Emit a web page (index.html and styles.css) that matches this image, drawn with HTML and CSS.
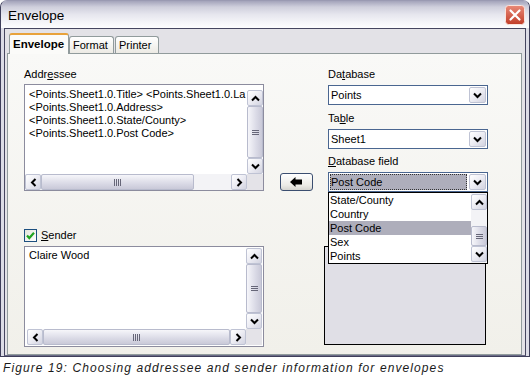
FILE: index.html
```html
<!DOCTYPE html>
<html>
<head>
<meta charset="utf-8">
<link rel="stylesheet" href="styles.css">
</head>
<body>
<div class="window">
  <div class="titlebar">
    <span class="title">Envelope</span>
    <span class="close">
      <svg width="20" height="20" viewBox="0 0 20 20">
        <defs><linearGradient id="cg" x1="0" y1="0" x2="0" y2="1"><stop offset="0" stop-color="#e98a78"/><stop offset="1" stop-color="#c03c28"/></linearGradient></defs>
        <rect x="0.5" y="0.5" width="19" height="19" rx="3" fill="url(#cg)" stroke="#fbe3dc"/>
        <path d="M5.5 5.5 L14.5 14.5 M14.5 5.5 L5.5 14.5" stroke="#fff" stroke-width="2.2" stroke-linecap="round"/>
      </svg>
    </span>
  </div>
  <div class="frame">
    <div class="client">
      <div class="tabs">
        <div class="tab active">Envelope</div>
        <div class="tab t-format">Format</div>
        <div class="tab t-printer">Printer</div>
      </div>
      <div class="panel">
        <div class="col-left">
          <div class="label">Addr<u>e</u>ssee</div>
          <div class="textbox addr">
            <div class="text">
              <div class="line">&lt;Points.Sheet1.0.Title&gt; &lt;Points.Sheet1.0.La</div>
              <div class="line">&lt;Points.Sheet1.0.Address&gt;</div>
              <div class="line">&lt;Points.Sheet1.0.State/County&gt;</div>
              <div class="line">&lt;Points.Sheet1.0.Post Code&gt;</div>
            </div>
            <div class="vscroll addr-v">
              <div class="sbtn"><svg width="9" height="7" viewBox="0 0 9 7"><path d="M1 5.5 L4.5 2 L8 5.5" fill="none" stroke="#000" stroke-width="2"/></svg></div>
              <div class="thumb-v"><svg width="7" height="7" viewBox="0 0 7 7"><path d="M0 1.5h7M0 3.5h7M0 5.5h7" stroke="#666678"/></svg></div>
              <div class="sbtn"><svg width="9" height="7" viewBox="0 0 9 7"><path d="M1 1.5 L4.5 5 L8 1.5" fill="none" stroke="#000" stroke-width="2"/></svg></div>
            </div>
            <div class="hscroll">
              <div class="sbtn"><svg width="7" height="9" viewBox="0 0 7 9"><path d="M5.5 1 L2 4.5 L5.5 8" fill="none" stroke="#000" stroke-width="2"/></svg></div>
              <div class="thumb-h addr-h"><svg width="9" height="7" viewBox="0 0 9 7"><path d="M1.5 0v7M3.5 0v7M5.5 0v7M7.5 0v7" stroke="#666678"/></svg></div>
              <div class="track"></div>
              <div class="sbtn"><svg width="7" height="9" viewBox="0 0 7 9"><path d="M1.5 1 L5 4.5 L1.5 8" fill="none" stroke="#000" stroke-width="2"/></svg></div>
            </div>
            <div class="corner"></div>
          </div>
          <div class="check-row">
            <span class="checkbox"><svg width="11" height="11" viewBox="0 0 11 11"><path d="M2 5.5 L4.3 8 L9 2.8" fill="none" stroke="#21a421" stroke-width="2.2"/></svg></span>
            <span><u>S</u>ender</span>
          </div>
          <div class="textbox sender">
            <div class="text">
              <div class="line">Claire Wood</div>
            </div>
            <div class="vscroll">
              <div class="sbtn"><svg width="9" height="7" viewBox="0 0 9 7"><path d="M1 5.5 L4.5 2 L8 5.5" fill="none" stroke="#000" stroke-width="2"/></svg></div>
              <div class="thumb-v"><svg width="7" height="7" viewBox="0 0 7 7"><path d="M0 1.5h7M0 3.5h7M0 5.5h7" stroke="#666678"/></svg></div>
              <div class="sbtn"><svg width="9" height="7" viewBox="0 0 9 7"><path d="M1 1.5 L4.5 5 L8 1.5" fill="none" stroke="#000" stroke-width="2"/></svg></div>
            </div>
            <div class="hscroll">
              <div class="sbtn"><svg width="7" height="9" viewBox="0 0 7 9"><path d="M5.5 1 L2 4.5 L5.5 8" fill="none" stroke="#000" stroke-width="2"/></svg></div>
              <div class="thumb-h sender-h"><svg width="9" height="7" viewBox="0 0 9 7"><path d="M1.5 0v7M3.5 0v7M5.5 0v7M7.5 0v7" stroke="#666678"/></svg></div>
              <div class="sbtn"><svg width="7" height="9" viewBox="0 0 7 9"><path d="M1.5 1 L5 4.5 L1.5 8" fill="none" stroke="#000" stroke-width="2"/></svg></div>
            </div>
            <div class="corner"></div>
          </div>
        </div>

        <div class="col-mid">
          <div class="arrow-btn">
            <svg width="13" height="10" viewBox="0 0 13 10"><path d="M0 5 L5.5 0 L5.5 2.5 L12 2.5 L12 7.5 L5.5 7.5 L5.5 10 Z" fill="#000"/></svg>
          </div>
        </div>

        <div class="col-right">
          <div class="label">Da<u>t</u>abase</div>
          <div class="combo">
            <span class="combo-text">Points</span>
            <span class="dd-btn"><svg width="9" height="7" viewBox="0 0 9 7"><path d="M1 1.5 L4.5 5 L8 1.5" fill="none" stroke="#000" stroke-width="2"/></svg></span>
          </div>
          <div class="label l2">Ta<u>b</u>le</div>
          <div class="combo">
            <span class="combo-text">Sheet1</span>
            <span class="dd-btn"><svg width="9" height="7" viewBox="0 0 9 7"><path d="M1 1.5 L4.5 5 L8 1.5" fill="none" stroke="#000" stroke-width="2"/></svg></span>
          </div>
          <div class="label l3"><u>D</u>atabase field</div>
          <div class="combo open">
            <span class="combo-text sel">Post Code</span>
            <span class="dd-btn"><svg width="9" height="7" viewBox="0 0 9 7"><path d="M1 1.5 L4.5 5 L8 1.5" fill="none" stroke="#000" stroke-width="2"/></svg></span>
            <div class="droplist">
              <div class="items">
                <div class="item">State/County</div>
                <div class="item">Country</div>
                <div class="item hl">Post Code</div>
                <div class="item">Sex</div>
                <div class="item">Points</div>
              </div>
              <div class="vscroll list-v">
                <div class="sbtn"><svg width="9" height="7" viewBox="0 0 9 7"><path d="M1 5.5 L4.5 2 L8 5.5" fill="none" stroke="#000" stroke-width="2"/></svg></div>
                <div class="track"></div>
                <div class="thumb-v list-thumb"><svg width="7" height="7" viewBox="0 0 7 7"><path d="M0 1.5h7M0 3.5h7M0 5.5h7" stroke="#666678"/></svg></div>
                <div class="sbtn"><svg width="9" height="7" viewBox="0 0 9 7"><path d="M1 1.5 L4.5 5 L8 1.5" fill="none" stroke="#000" stroke-width="2"/></svg></div>
              </div>
            </div>
          </div>
          <div class="preview"></div>
        </div>
      </div>
    </div>
  </div>
</div>
<div class="caption">Figure 19: Choosing addressee and sender information for envelopes</div>
</body>
</html>
```

FILE: styles.css
```css
* { box-sizing: border-box; }

body {
  margin: 0;
  width: 530px;
  height: 380px;
  overflow: hidden;
  background: #fff;
  font-family: "Liberation Sans", Arial, sans-serif;
  font-size: 11px;
  color: #000;
}

u { text-decoration: underline; text-underline-offset: 1px; }

.window {
  width: 530px;
  height: 357px;
  border: 1px solid #3e3e5a;
  border-top-color: #9a9ab2;
  border-radius: 7px 7px 0 0;
  background: #cfcfdc;
  display: flex;
  flex-direction: column;
  overflow: hidden;
}

.titlebar {
  height: 27px;
  flex: none;
  display: flex;
  align-items: center;
  justify-content: space-between;
  padding: 0 4px 0 7px;
  background: linear-gradient(to bottom, #a3a3ba 0, #cfcfdc 22%, #e6e6ee 50%, #f7f7fa 85%, #fdfdfe 100%);
}

.title {
  font-size: 13.5px;
  color: #000;
  padding-top: 1px;
}

.close { display: flex; }

.frame {
  flex: 1;
  display: flex;
  padding: 0 3px;
  background: #dcdce6;
}

.client {
  flex: 1;
  display: flex;
  flex-direction: column;
  border: 1px solid #45455f;
  border-bottom: 1px solid #6a6a86;
  background: #e3e2e7;
  padding: 0 3px 0 2px;
}

.tabs {
  height: 24px;
  flex: none;
  display: flex;
  align-items: flex-end;
  padding-left: 2px;
  position: relative;
  z-index: 2;
}

.tab {
  height: 17px;
  border: 1px solid #919b9c;
  border-bottom: none;
  border-radius: 3px 3px 0 0;
  background: linear-gradient(to bottom, #ffffff, #eceae4);
  display: flex;
  align-items: center;
  padding: 0 0 0 3px;
  line-height: 1;
}

.tab.active {
  width: 60px;
  height: 21px;
  margin-bottom: -1px;
  border-top: 2px solid #e8a23a;
  background: #fbfbf9;
  font-weight: bold;
  font-size: 11.5px;
  padding-left: 3px;
  padding-top: 1px;
}

.t-format { width: 45px; margin-left: 0; }
.t-printer { width: 44px; margin-left: 1px; }

.panel {
  flex: 1;
  border: 1px solid #919b9c;
  background: linear-gradient(to bottom, #f9f9f7, #f1f0ea);
  padding: 13px 0 0 16px;
  display: grid;
  grid-template-columns: 240px 64px 160px;
  align-items: start;
}

.label {
  height: 14px;
  line-height: 14px;
  white-space: nowrap;
}

.col-left { display: flex; flex-direction: column; }
.col-left .label { margin-bottom: 3px; }

.textbox {
  background: #fff;
  border: 1px solid #8c8c9e;
  display: grid;
  grid-template-columns: 1fr 16px;
  grid-template-rows: 1fr 16px;
  overflow: hidden;
}

.textbox.addr { height: 107px; }

.textbox .text {
  overflow: hidden;
  white-space: nowrap;
  padding: 3px 0 0 4px;
}

.line { height: 13px; line-height: 13px; }

.vscroll {
  width: 16px;
  display: flex;
  flex-direction: column;
  background: #f3f3f6;
}

.addr-v { padding-top: 5px; background: #fff; }

.hscroll {
  height: 16px;
  display: flex;
  background: #f3f3f6;
}

.sbtn {
  width: 16px;
  height: 16px;
  flex: none;
  border: 1px solid #bfc3d4;
  border-radius: 2px;
  background: linear-gradient(135deg, #ffffff 0%, #ececf3 50%, #d2d3e0 100%);
  display: flex;
  align-items: center;
  justify-content: center;
}

.thumb-v {
  flex: 1;
  border: 1px solid #b8bbcd;
  border-radius: 2px;
  background: linear-gradient(to right, #f6f6fa, #dadae6 60%, #c9c9d8);
  display: flex;
  align-items: center;
  justify-content: center;
}

.thumb-h {
  border: 1px solid #b8bbcd;
  border-radius: 2px;
  background: linear-gradient(to bottom, #f6f6fa, #dadae6 60%, #c9c9d8);
  display: flex;
  align-items: center;
  justify-content: center;
}

.addr-h { width: 153px; }
.sender-h { flex: 1; }

.track { flex: 1; background: #f3f3f6; }

.corner { background: #e4e3e8; }

.check-row {
  margin-top: 38px;
  height: 13px;
  display: flex;
  align-items: center;
  gap: 4px;
  line-height: 13px;
}

.checkbox {
  width: 13px;
  height: 13px;
  border: 1px solid #1c4f7f;
  background: linear-gradient(135deg, #e4e4dc, #ffffff);
  display: flex;
  align-items: center;
  justify-content: center;
}

.textbox.sender {
  margin-top: 4px;
  height: 101px;
  padding: 1px 1px 1px 2px;
}

.sender .text { padding: 1px 0 0 2px; }

.col-mid { padding: 106px 0 0 16px; }

.arrow-btn {
  width: 33px;
  height: 18px;
  border: 1px solid #3b4e70;
  border-radius: 3px;
  background: linear-gradient(to bottom, #ffffff, #ecebe6 70%, #d6d5d0);
  display: flex;
  align-items: center;
  justify-content: center;
}

.col-right { display: flex; flex-direction: column; }
.col-right .label { margin-bottom: 4px; }
.col-right .l2 { margin-top: 6px; }
.col-right .l3 { margin-top: 5px; }

.combo {
  height: 20px;
  border: 1px solid #4a6690;
  background: #fff;
  display: flex;
  align-items: center;
  padding: 0 1px 0 1px;
  position: relative;
}

.combo-text {
  flex: 1;
  height: 16px;
  line-height: 16px;
  padding-left: 1px;
}

.combo-text.sel {
  background: #aeaebb;
  outline: 1px dotted #333;
  outline-offset: -1px;
  margin-right: 2px;
}

.dd-btn {
  width: 17px;
  height: 16px;
  border: 1px solid #bfc3d4;
  border-radius: 2px;
  background: linear-gradient(135deg, #ffffff 0%, #ececf3 50%, #d2d3e0 100%);
  display: flex;
  align-items: center;
  justify-content: center;
}

.droplist {
  position: absolute;
  left: -1px;
  top: 19px;
  width: 160px;
  height: 72px;
  border: 1px solid #000;
  background: #fff;
  display: flex;
  z-index: 3;
}

.items { flex: 1; padding-top: 0; }

.item {
  height: 14px;
  line-height: 14px;
  padding-left: 1px;
}

.item.hl { background: #aeaebb; }

.list-v { padding: 1px 0 1px 0; background: #f3f3f6; }
.list-thumb { flex: none; height: 20px; }

.preview {
  margin-top: 54px;
  margin-left: -4px;
  width: 162px;
  height: 99px;
  border: 1px solid #000;
  background: #e0dfe6;
}

.caption {
  height: 23px;
  line-height: 23px;
  padding-left: 3px;
  font-style: italic;
  font-size: 12px;
  letter-spacing: 1.1px;
  color: #1a1a1a;
  white-space: nowrap;
}
```
